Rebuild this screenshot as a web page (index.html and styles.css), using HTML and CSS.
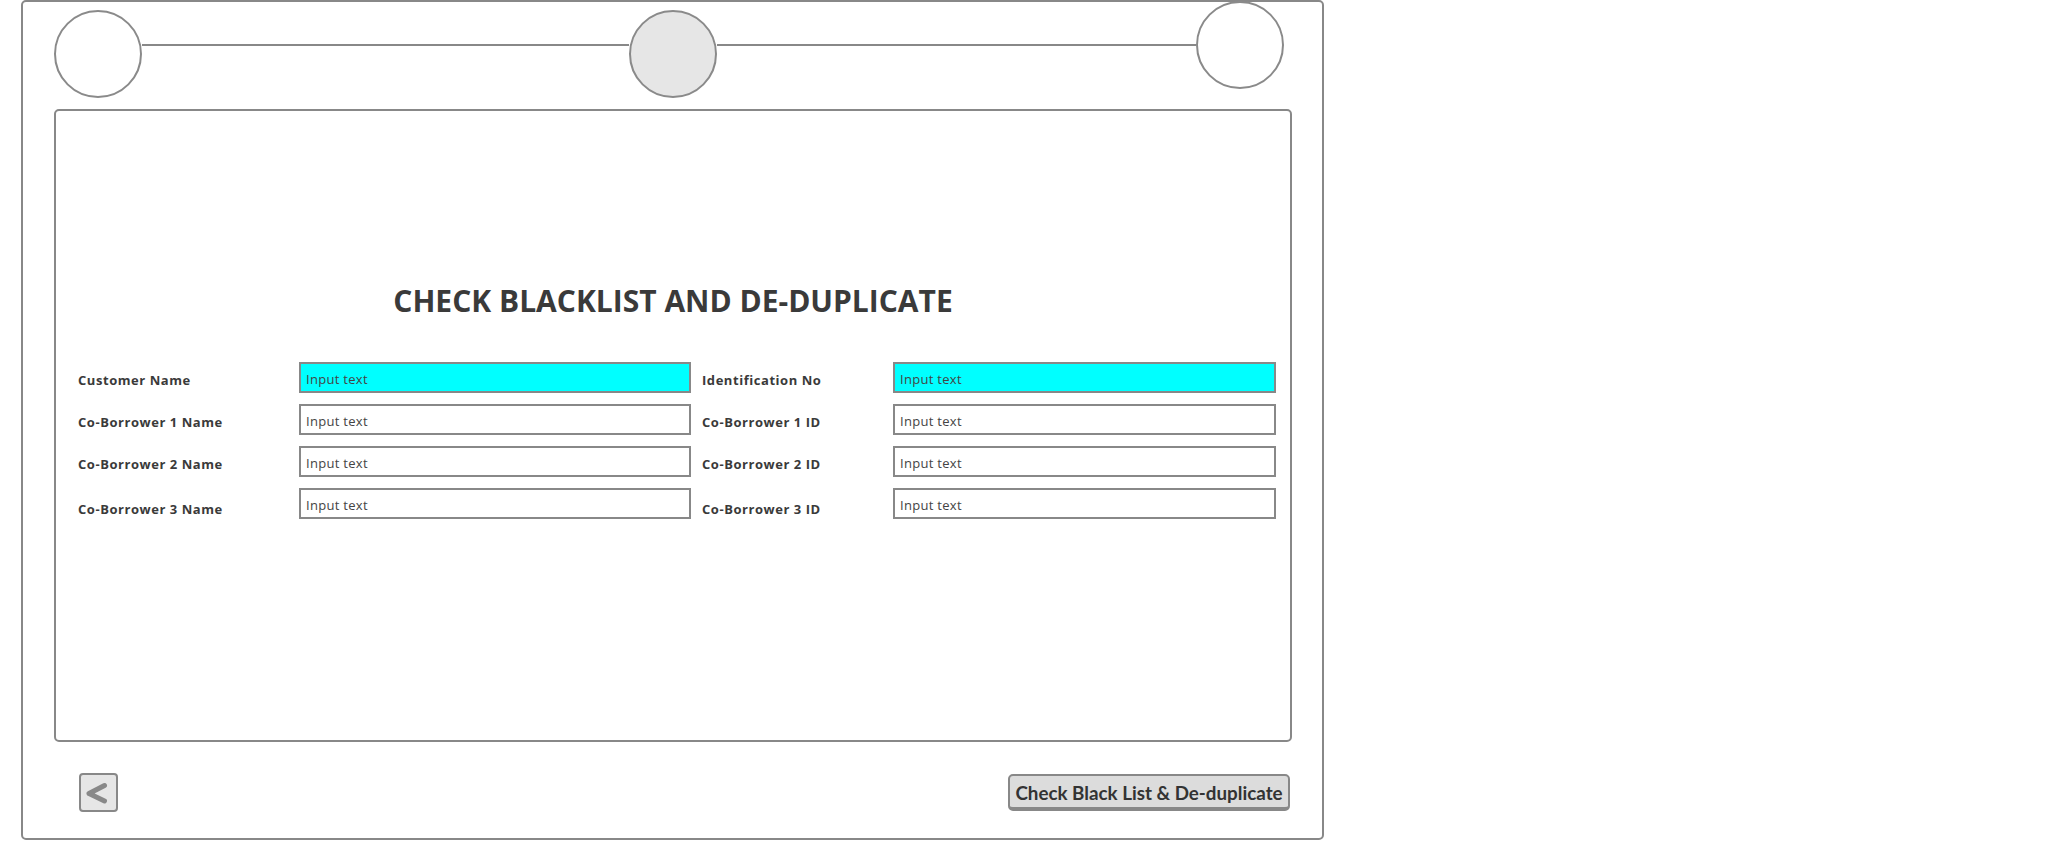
FILE: index.html
```html
<!DOCTYPE html>
<html lang="en">
<head>
    <meta charset="UTF-8">
    <meta name="viewport" content="width=device-width, initial-scale=1.0">
    <title>Check Blacklist and De-duplicate</title>
    <link rel="stylesheet" href="styles.css">
</head>
<body>
    <div class="frame">
        <div class="stepper">
            <div class="step"></div>
            <div class="step-line first"></div>
            <div class="step current"></div>
            <div class="step-line"></div>
            <div class="step last"></div>
        </div>

        <div class="panel">
            <h1>CHECK BLACKLIST AND DE-DUPLICATE</h1>

            <div class="form-grid">
                <label for="customerName">Customer Name</label>
                <input type="text" id="customerName" class="highlight" value="Input text">
                <label for="idNo">Identification No</label>
                <input type="text" id="idNo" class="highlight" value="Input text">

                <label for="co1Name">Co-Borrower 1 Name</label>
                <input type="text" id="co1Name" value="Input text">
                <label for="co1Id">Co-Borrower 1 ID</label>
                <input type="text" id="co1Id" value="Input text">

                <label for="co2Name">Co-Borrower 2 Name</label>
                <input type="text" id="co2Name" value="Input text">
                <label for="co2Id">Co-Borrower 2 ID</label>
                <input type="text" id="co2Id" value="Input text">

                <label for="co3Name" class="low">Co-Borrower 3 Name</label>
                <input type="text" id="co3Name" value="Input text">
                <label for="co3Id" class="low">Co-Borrower 3 ID</label>
                <input type="text" id="co3Id" value="Input text">
            </div>
        </div>

        <div class="footer">
            <button class="back-btn" title="Back">
                <svg width="35" height="35" viewBox="0 0 35 35">
                    <polyline points="23.5,10.5 8,18.5 23.5,26" fill="none" stroke="#888" stroke-width="5" stroke-linecap="round" stroke-linejoin="round"/>
                </svg>
            </button>
            <button class="check-btn">Check Black List &amp; De-duplicate</button>
        </div>
    </div>
</body>
</html>
```

FILE: styles.css
```css
body {
    margin: 0;
    font-family: "Open Sans", Lato, sans-serif;
    color: #333;
    background: #fff;
}
.frame {
    box-sizing: border-box;
    width: 1303px;
    height: 840px;
    margin-left: 21px;
    border: 2px solid #888;
    border-radius: 5px;
}
.stepper {
    display: flex;
    align-items: flex-start;
    height: 107px;
    padding: 0 38px 0 31px;
}
.step {
    box-sizing: border-box;
    flex-shrink: 0;
    width: 88px;
    height: 88px;
    margin-top: 8px;
    border: 2px solid #8a8a8a;
    border-radius: 50%;
    background: #fff;
}
.step.current {
    background: #e6e6e6;
}
.step.last {
    margin-top: -1px;
}
.step-line {
    flex: 1;
    height: 2px;
    margin-top: 42px;
    background: #888;
}
.step-line.first {
    flex: 0 0 487px;
}
.panel {
    box-sizing: border-box;
    width: 1238px;
    height: 633px;
    margin-left: 31px;
    padding-top: 170px;
    border: 2px solid #888;
    border-radius: 5px;
}
h1 {
    margin: 0 0 41px;
    font: 700 30px/40px "Open Sans", sans-serif;
    text-align: center;
    color: #3a3a3a;
}
.form-grid {
    display: grid;
    grid-template-columns: 210px 392px 180px 383px;
    column-gap: 11px;
    row-gap: 11px;
    padding-left: 22px;
}
.form-grid label {
    align-self: center;
    padding-top: 4px;
    font-size: 13px;
    font-weight: 700;
    letter-spacing: 0.55px;
    color: #3a3a3a;
}
.form-grid label.low {
    padding-top: 11px;
}
input {
    box-sizing: border-box;
    height: 31px;
    padding: 2px 5px 0;
    border: 2px solid #888;
    background: #fff;
    font: 13px "Open Sans", sans-serif;
    letter-spacing: 0.3px;
    color: #444;
    outline: none;
}
input.highlight {
    background: #00ffff;
}
.footer {
    display: flex;
    justify-content: space-between;
    align-items: center;
    margin-top: 31px;
    padding: 0 32px 0 56px;
}
.back-btn {
    box-sizing: border-box;
    display: flex;
    align-items: center;
    justify-content: center;
    width: 39px;
    height: 39px;
    padding: 0;
    border: 2px solid #888;
    border-radius: 4px;
    background: #e6e6e6;
    cursor: pointer;
}
.check-btn {
    box-sizing: border-box;
    width: 282px;
    height: 37px;
    padding: 2px 0 0;
    border: 2px solid #888;
    border-bottom-width: 4px;
    border-radius: 5px;
    background: #dcdcdc;
    font: 700 18.8px Lato, sans-serif;
    color: #333;
    cursor: pointer;
}
```
